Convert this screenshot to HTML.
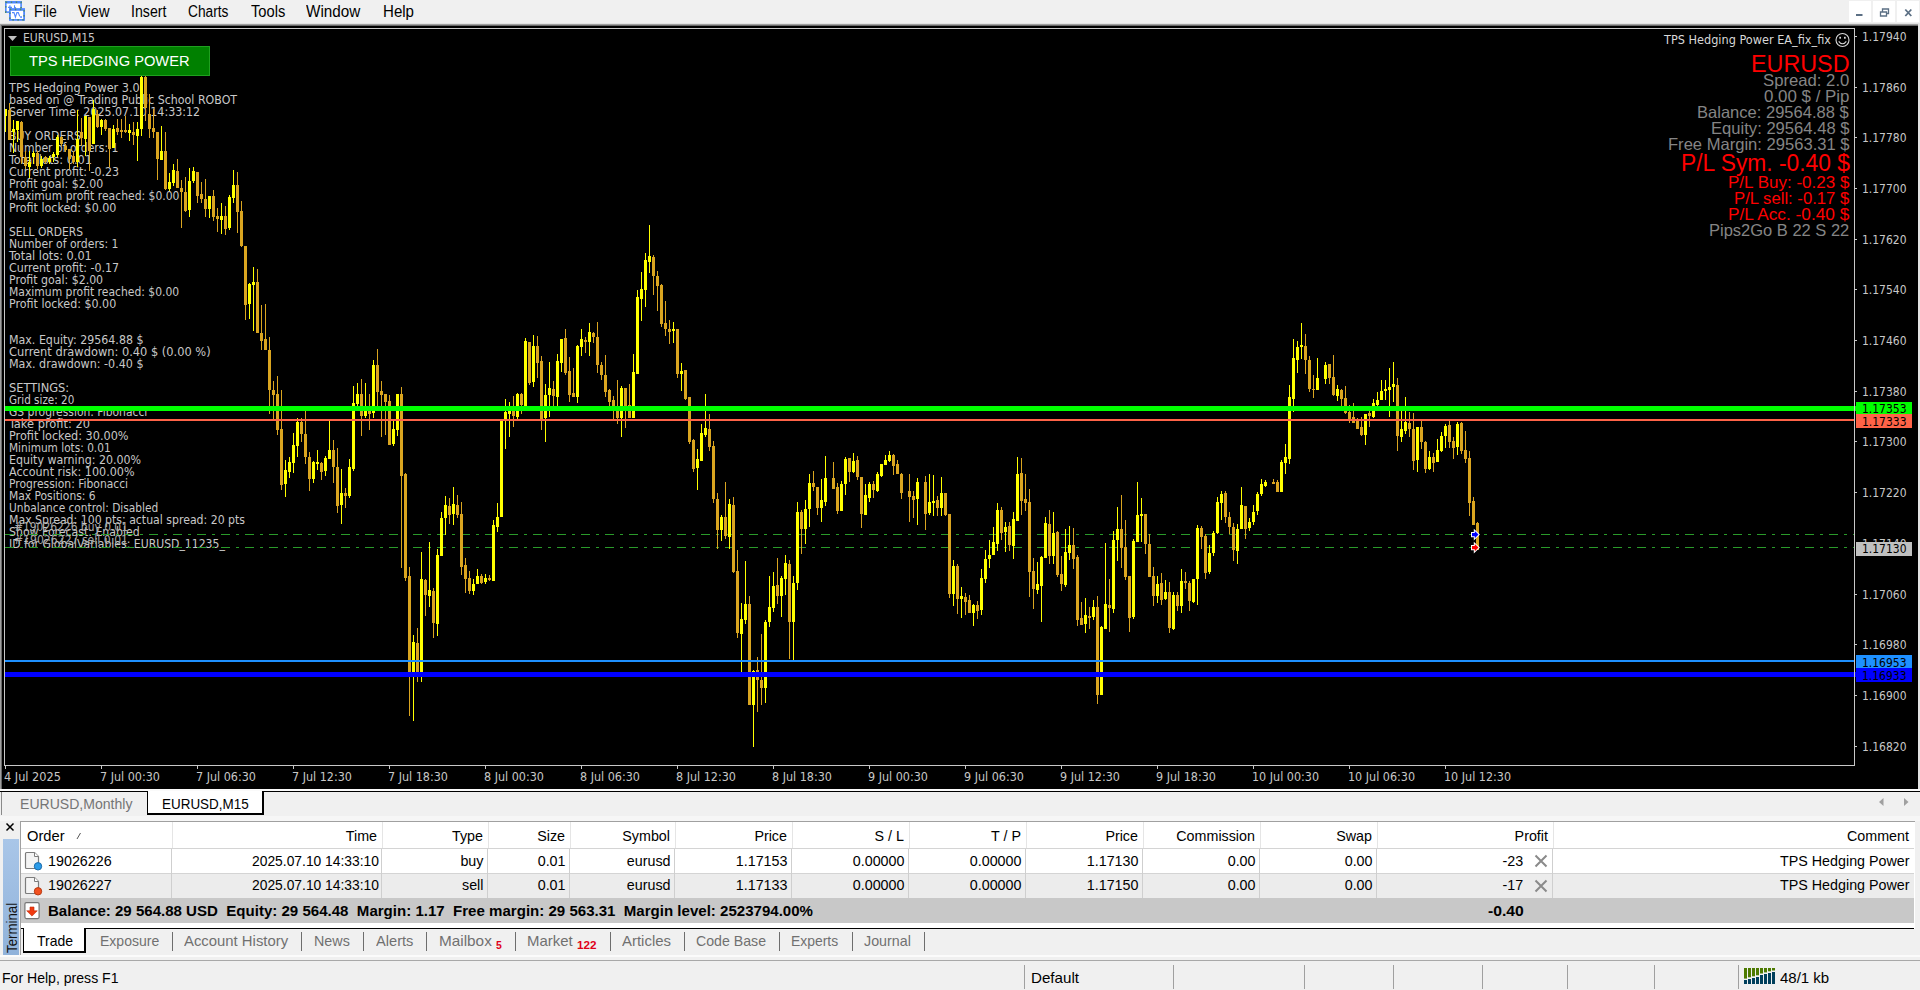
<!DOCTYPE html>
<html lang="en"><head><meta charset="utf-8"><title>EURUSD,M15</title>
<style>
html,body{margin:0;padding:0;background:#f0f0f0;overflow:hidden}
body{width:1920px;height:990px;position:relative;font-family:"Liberation Sans",sans-serif;font-size:14.3px;color:#000}
.a{position:absolute;white-space:nowrap}
#menu{left:0;top:0;width:1920px;height:23px;background:#f0f0f0}
#chart{left:0;top:23px;width:1920px;height:767px;background:#000}
</style></head><body>
<div id="menu" class="a"></div>
<div id="chart" class="a"></div>
<svg class="a" style="left:0;top:0" width="1920" height="990" viewBox="0 0 1920 990" shape-rendering="crispEdges">
<rect x="0" y="23" width="1920" height="1" fill="#e3e3e3"/>
<rect x="0" y="24" width="1920" height="1" fill="#a0a0a0"/>
<rect x="0" y="25" width="1920" height="1" fill="#696969"/>
<rect x="0" y="24" width="1" height="766" fill="#a0a0a0"/>
<rect x="1" y="25" width="1" height="765" fill="#696969"/>
<rect x="2" y="26" width="1916" height="764" fill="#000"/>
<rect x="1918" y="24" width="2" height="766" fill="#e3e3e3"/>
</svg>
<span class="a" style="top:82.62px;font-size:11.8px;line-height:11.8px;color:#c8c8c8;font-family:'DejaVu Sans Condensed','DejaVu Sans',sans-serif;left:9.3px;transform-origin:0 50%;transform:scaleX(1.0621);">TPS Hedging Power 3.0</span>
<span class="a" style="top:94.62px;font-size:11.8px;line-height:11.8px;color:#c8c8c8;font-family:'DejaVu Sans Condensed','DejaVu Sans',sans-serif;left:9.3px;transform-origin:0 50%;transform:scaleX(1.0410);">based on @ Trading Public School ROBOT</span>
<span class="a" style="top:106.62px;font-size:11.8px;line-height:11.8px;color:#c8c8c8;font-family:'DejaVu Sans Condensed','DejaVu Sans',sans-serif;left:9.3px;transform-origin:0 50%;transform:scaleX(1.0452);">Server Time: 2025.07.10 14:33:12</span>
<span class="a" style="top:130.62px;font-size:11.8px;line-height:11.8px;color:#c8c8c8;font-family:'DejaVu Sans Condensed','DejaVu Sans',sans-serif;left:9.3px;transform-origin:0 50%;transform:scaleX(1.0341);">BUY ORDERS</span>
<span class="a" style="top:142.62px;font-size:11.8px;line-height:11.8px;color:#c8c8c8;font-family:'DejaVu Sans Condensed','DejaVu Sans',sans-serif;left:9.3px;transform-origin:0 50%;transform:scaleX(1.0214);">Number of orders: 1</span>
<span class="a" style="top:154.62px;font-size:11.8px;line-height:11.8px;color:#c8c8c8;font-family:'DejaVu Sans Condensed','DejaVu Sans',sans-serif;left:9.3px;transform-origin:0 50%;transform:scaleX(1.0675);">Total lots: 0.01</span>
<span class="a" style="top:166.62px;font-size:11.8px;line-height:11.8px;color:#c8c8c8;font-family:'DejaVu Sans Condensed','DejaVu Sans',sans-serif;left:9.3px;transform-origin:0 50%;transform:scaleX(1.0410);">Current profit: -0.23</span>
<span class="a" style="top:178.62px;font-size:11.8px;line-height:11.8px;color:#c8c8c8;font-family:'DejaVu Sans Condensed','DejaVu Sans',sans-serif;left:9.3px;transform-origin:0 50%;transform:scaleX(1.0350);">Profit goal: $2.00</span>
<span class="a" style="top:190.62px;font-size:11.8px;line-height:11.8px;color:#c8c8c8;font-family:'DejaVu Sans Condensed','DejaVu Sans',sans-serif;left:9.3px;transform-origin:0 50%;transform:scaleX(1.0178);">Maximum profit reached: $0.00</span>
<span class="a" style="top:202.62px;font-size:11.8px;line-height:11.8px;color:#c8c8c8;font-family:'DejaVu Sans Condensed','DejaVu Sans',sans-serif;left:9.3px;transform-origin:0 50%;transform:scaleX(1.0467);">Profit locked: $0.00</span>
<span class="a" style="top:226.62px;font-size:11.8px;line-height:11.8px;color:#c8c8c8;font-family:'DejaVu Sans Condensed','DejaVu Sans',sans-serif;left:9.3px;transform-origin:0 50%;transform:scaleX(1.0087);">SELL ORDERS</span>
<span class="a" style="top:238.62px;font-size:11.8px;line-height:11.8px;color:#c8c8c8;font-family:'DejaVu Sans Condensed','DejaVu Sans',sans-serif;left:9.3px;transform-origin:0 50%;transform:scaleX(1.0223);">Number of orders: 1</span>
<span class="a" style="top:250.62px;font-size:11.8px;line-height:11.8px;color:#c8c8c8;font-family:'DejaVu Sans Condensed','DejaVu Sans',sans-serif;left:9.3px;transform-origin:0 50%;transform:scaleX(1.0662);">Total lots: 0.01</span>
<span class="a" style="top:262.62px;font-size:11.8px;line-height:11.8px;color:#c8c8c8;font-family:'DejaVu Sans Condensed','DejaVu Sans',sans-serif;left:9.3px;transform-origin:0 50%;transform:scaleX(1.0410);">Current profit: -0.17</span>
<span class="a" style="top:274.62px;font-size:11.8px;line-height:11.8px;color:#c8c8c8;font-family:'DejaVu Sans Condensed','DejaVu Sans',sans-serif;left:9.3px;transform-origin:0 50%;transform:scaleX(1.0339);">Profit goal: $2.00</span>
<span class="a" style="top:286.62px;font-size:11.8px;line-height:11.8px;color:#c8c8c8;font-family:'DejaVu Sans Condensed','DejaVu Sans',sans-serif;left:9.3px;transform-origin:0 50%;transform:scaleX(1.0160);">Maximum profit reached: $0.00</span>
<span class="a" style="top:298.62px;font-size:11.8px;line-height:11.8px;color:#c8c8c8;font-family:'DejaVu Sans Condensed','DejaVu Sans',sans-serif;left:9.3px;transform-origin:0 50%;transform:scaleX(1.0447);">Profit locked: $0.00</span>
<span class="a" style="top:334.62px;font-size:11.8px;line-height:11.8px;color:#c8c8c8;font-family:'DejaVu Sans Condensed','DejaVu Sans',sans-serif;left:9.3px;transform-origin:0 50%;transform:scaleX(1.0420);">Max. Equity: 29564.88 $</span>
<span class="a" style="top:346.62px;font-size:11.8px;line-height:11.8px;color:#c8c8c8;font-family:'DejaVu Sans Condensed','DejaVu Sans',sans-serif;left:9.3px;transform-origin:0 50%;transform:scaleX(1.0750);">Current drawdown: 0.40 $ (0.00 %)</span>
<span class="a" style="top:358.62px;font-size:11.8px;line-height:11.8px;color:#c8c8c8;font-family:'DejaVu Sans Condensed','DejaVu Sans',sans-serif;left:9.3px;transform-origin:0 50%;transform:scaleX(1.0498);">Max. drawdown: -0.40 $</span>
<span class="a" style="top:382.62px;font-size:11.8px;line-height:11.8px;color:#c8c8c8;font-family:'DejaVu Sans Condensed','DejaVu Sans',sans-serif;left:9.3px;transform-origin:0 50%;transform:scaleX(1.0786);">SETTINGS:</span>
<span class="a" style="top:394.62px;font-size:11.8px;line-height:11.8px;color:#c8c8c8;font-family:'DejaVu Sans Condensed','DejaVu Sans',sans-serif;left:9.3px;transform-origin:0 50%;transform:scaleX(0.9792);">Grid size: 20</span>
<span class="a" style="top:406.62px;font-size:11.8px;line-height:11.8px;color:#c8c8c8;font-family:'DejaVu Sans Condensed','DejaVu Sans',sans-serif;left:9.3px;transform-origin:0 50%;transform:scaleX(1.0132);">GS progression: Fibonacci</span>
<span class="a" style="top:418.62px;font-size:11.8px;line-height:11.8px;color:#c8c8c8;font-family:'DejaVu Sans Condensed','DejaVu Sans',sans-serif;left:9.3px;transform-origin:0 50%;transform:scaleX(1.0744);">Take profit: 20</span>
<span class="a" style="top:430.62px;font-size:11.8px;line-height:11.8px;color:#c8c8c8;font-family:'DejaVu Sans Condensed','DejaVu Sans',sans-serif;left:9.3px;transform-origin:0 50%;transform:scaleX(1.0605);">Profit locked: 30.00%</span>
<span class="a" style="top:442.62px;font-size:11.8px;line-height:11.8px;color:#c8c8c8;font-family:'DejaVu Sans Condensed','DejaVu Sans',sans-serif;left:9.3px;transform-origin:0 50%;transform:scaleX(0.9935);">Minimum lots: 0.01</span>
<span class="a" style="top:454.62px;font-size:11.8px;line-height:11.8px;color:#c8c8c8;font-family:'DejaVu Sans Condensed','DejaVu Sans',sans-serif;left:9.3px;transform-origin:0 50%;transform:scaleX(1.0416);">Equity warning: 20.00%</span>
<span class="a" style="top:466.62px;font-size:11.8px;line-height:11.8px;color:#c8c8c8;font-family:'DejaVu Sans Condensed','DejaVu Sans',sans-serif;left:9.3px;transform-origin:0 50%;transform:scaleX(1.0516);">Account risk: 100.00%</span>
<span class="a" style="top:478.62px;font-size:11.8px;line-height:11.8px;color:#c8c8c8;font-family:'DejaVu Sans Condensed','DejaVu Sans',sans-serif;left:9.3px;transform-origin:0 50%;transform:scaleX(1.0125);">Progression: Fibonacci</span>
<span class="a" style="top:490.62px;font-size:11.8px;line-height:11.8px;color:#c8c8c8;font-family:'DejaVu Sans Condensed','DejaVu Sans',sans-serif;left:9.3px;transform-origin:0 50%;transform:scaleX(1.0090);">Max Positions: 6</span>
<span class="a" style="top:502.62px;font-size:11.8px;line-height:11.8px;color:#c8c8c8;font-family:'DejaVu Sans Condensed','DejaVu Sans',sans-serif;left:9.3px;transform-origin:0 50%;transform:scaleX(0.9981);">Unbalance control: Disabled</span>
<span class="a" style="top:514.62px;font-size:11.8px;line-height:11.8px;color:#c8c8c8;font-family:'DejaVu Sans Condensed','DejaVu Sans',sans-serif;left:9.3px;transform-origin:0 50%;transform:scaleX(1.0303);">Max Spread: 100 pts; actual spread: 20 pts</span>
<span class="a" style="top:526.62px;font-size:11.8px;line-height:11.8px;color:#c8c8c8;font-family:'DejaVu Sans Condensed','DejaVu Sans',sans-serif;left:9.3px;transform-origin:0 50%;transform:scaleX(1.0315);">Show Forecast: Enabled</span>
<span class="a" style="top:538.62px;font-size:11.8px;line-height:11.8px;color:#c8c8c8;font-family:'DejaVu Sans Condensed','DejaVu Sans',sans-serif;left:9.3px;transform-origin:0 50%;transform:scaleX(1.0244);">ID for GlobalVariables: EURUSD_11235_</span>
<span class="a" style="top:539.30px;font-size:11.7px;line-height:11.7px;color:#c8c8c8;font-family:'DejaVu Sans Condensed','DejaVu Sans',sans-serif;left:1861.5px;transform-origin:0 50%;transform:scaleX(1.0237);">1.17140</span>

<svg class="a" style="left:0;top:0" width="1920" height="990" viewBox="0 0 1920 990" shape-rendering="crispEdges">
<g stroke="#2a9a2a" stroke-width="1" stroke-dasharray="9 6 3 6" stroke-dashoffset="0" fill="none"><path d="M5 534.5H1854M5 547.5H1854"/></g>
<path fill="#daa520" d="M9 103v37h1v-37zM8 110v30h3v-30zM21 121v43h1v-43zM20 122v35h3v-35zM25 151v18h1v-18zM24 157v9h3v-9zM37 151v18h1v-18zM36 153v13h3v-13zM45 156v8h1v-8zM44 157v5h3v-5zM61 136v10h1v-10zM60 137v7h3v-7zM65 144v8h1v-8zM64 146v4h3v-4zM69 149v20h1v-20zM68 149v10h3v-10zM73 151v13h1v-13zM72 156v6h3v-6zM81 118v28h1v-28zM80 132v6h3v-6zM89 117v54h1v-54zM88 117v34h3v-34zM97 110v18h1v-18zM96 114v13h3v-13zM105 119v12h1v-12zM104 120v9h3v-9zM109 128v39h1v-39zM108 128v21h3v-21zM117 119v16h1v-16zM116 128v4h3v-4zM121 119v19h1v-19zM120 130v2h3v-2zM125 116v17h1v-17zM124 130v2h3v-2zM133 122v23h1v-23zM132 132v3h3v-3zM145 76v45h1v-45zM144 77v31h3v-31zM149 94v44h1v-44zM148 114v15h3v-15zM153 109v29h1v-29zM152 128v4h3v-4zM157 132v48h1v-48zM156 132v27h3v-27zM165 132v58h1v-58zM164 151v38h3v-38zM177 159v29h1v-29zM176 171v17h3v-17zM181 180v48h1v-48zM180 188v4h3v-4zM185 177v35h1v-35zM184 192v19h3v-19zM197 172v31h1v-31zM196 172v24h3v-24zM201 182v21h1v-21zM200 194v5h3v-5zM205 179v38h1v-38zM204 199v10h3v-10zM213 190v31h1v-31zM212 196v21h3v-21zM217 208v24h1v-24zM216 216v3h3v-3zM225 206v29h1v-29zM224 216v13h3v-13zM237 172v61h1v-61zM236 185v27h3v-27zM241 201v46h1v-46zM240 211v35h3v-35zM245 246v74h1v-74zM244 246v59h3v-59zM257 269v64h1v-64zM256 282v51h3v-51zM261 305v45h1v-45zM260 333v8h3v-8zM265 304v46h1v-46zM264 339v11h3v-11zM269 337v77h1v-77zM268 350v40h3v-40zM273 381v38h1v-38zM272 390v5h3v-5zM277 376v59h1v-59zM276 394v36h3v-36zM281 390v100h1v-100zM280 429v56h3v-56zM301 418v24h1v-24zM300 422v12h3v-12zM305 411v53h1v-53zM304 434v23h3v-23zM309 452v39h1v-39zM308 457v22h3v-22zM321 462v18h1v-18zM320 463v9h3v-9zM333 440v43h1v-43zM332 450v17h3v-17zM337 448v65h1v-65zM336 467v39h3v-39zM345 488v20h1v-20zM344 493v3h3v-3zM361 379v57h1v-57zM360 394v22h3v-22zM369 394v36h1v-36zM368 411v3h3v-3zM377 349v57h1v-57zM376 365v27h3v-27zM381 381v56h1v-56zM380 391v4h3v-4zM385 394v41h1v-41zM384 394v8h3v-8zM389 395v50h1v-50zM388 401v44h3v-44zM401 387v181h1v-181zM400 394v82h3v-82zM405 473v108h1v-108zM404 474v104h3v-104zM409 567v149h1v-149zM408 576v101h3v-101zM417 628v54h1v-54zM416 643v34h3v-34zM425 579v37h1v-37zM424 580v15h3v-15zM433 588v50h1v-50zM432 591v32h3v-32zM449 498v26h1v-26zM448 506v9h3v-9zM457 495v23h1v-23zM456 505v10h3v-10zM461 502v73h1v-73zM460 514v53h3v-53zM465 558v35h1v-35zM464 565v14h3v-14zM469 571v23h1v-23zM468 578v13h3v-13zM481 574v10h1v-10zM480 576v7h3v-7zM489 575v6h1v-6zM488 578v2h3v-2zM513 396v31h1v-31zM512 411v5h3v-5zM521 393v21h1v-21zM520 394v11h3v-11zM529 342v43h1v-43zM528 342v41h3v-41zM537 336v42h1v-42zM536 346v17h3v-17zM541 356v74h1v-74zM540 361v58h3v-58zM553 381v25h1v-25zM552 389v7h3v-7zM565 329v46h1v-46zM564 338v35h3v-35zM569 357v45h1v-45zM568 371v24h3v-24zM573 368v29h1v-29zM572 393v4h3v-4zM585 337v16h1v-16zM584 340v2h3v-2zM593 332v11h1v-11zM592 333v4h3v-4zM597 322v51h1v-51zM596 337v28h3v-28zM601 362v18h1v-18zM600 365v10h3v-10zM605 355v42h1v-42zM604 375v17h3v-17zM609 389v17h1v-17zM608 390v12h3v-12zM613 396v23h1v-23zM612 400v8h3v-8zM617 380v44h1v-44zM616 408v10h3v-10zM625 388v40h1v-40zM624 388v20h3v-20zM629 384v34h1v-34zM628 405v13h3v-13zM653 255v40h1v-40zM652 257v19h3v-19zM657 271v40h1v-40zM656 276v10h3v-10zM661 284v43h1v-43zM660 285v39h3v-39zM665 301v35h1v-35zM664 323v6h3v-6zM669 320v24h1v-24zM668 329v3h3v-3zM677 329v49h1v-49zM676 329v45h3v-45zM685 370v30h1v-30zM684 370v29h3v-29zM689 397v47h1v-47zM688 397v45h3v-45zM693 439v33h1v-33zM692 440v29h3v-29zM709 414v37h1v-37zM708 429v18h3v-18zM713 441v62h1v-62zM712 446v53h3v-53zM717 493v56h1v-56zM716 499v31h3v-31zM725 482v57h1v-57zM724 517v19h3v-19zM733 497v76h1v-76zM732 505v67h3v-67zM737 550v88h1v-88zM736 571v62h3v-62zM749 596v109h1v-109zM748 604v101h3v-101zM757 657v55h1v-55zM756 670v10h3v-10zM761 634v71h1v-71zM760 680v8h3v-8zM777 558v46h1v-46zM776 585v11h3v-11zM789 560v99h1v-99zM788 564v58h3v-58zM801 510v44h1v-44zM800 512v17h3v-17zM813 471v20h1v-20zM812 483v4h3v-4zM817 487v28h1v-28zM816 487v21h3v-21zM833 462v27h1v-27zM832 478v11h3v-11zM837 483v31h1v-31zM836 487v24h3v-24zM849 458v24h1v-24zM848 458v14h3v-14zM857 456v24h1v-24zM856 460v17h3v-17zM861 477v51h1v-51zM860 477v37h3v-37zM873 481v17h1v-17zM872 484v6h3v-6zM893 454v21h1v-21zM892 455v11h3v-11zM897 460v14h1v-14zM896 464v10h3v-10zM901 473v26h1v-26zM900 474v19h3v-19zM909 474v48h1v-48zM908 491v6h3v-6zM913 491v27h1v-27zM912 496v4h3v-4zM925 476v54h1v-54zM924 482v32h3v-32zM937 496v20h1v-20zM936 500v8h3v-8zM945 493v23h1v-23zM944 493v22h3v-22zM949 514v84h1v-84zM948 514v80h3v-80zM957 564v50h1v-50zM956 566v33h3v-33zM965 593v22h1v-22zM964 597v5h3v-5zM969 595v18h1v-18zM968 600v13h3v-13zM977 601v18h1v-18zM976 605v6h3v-6zM1001 507v33h1v-33zM1000 510v23h3v-23zM1009 522v29h1v-29zM1008 526v19h3v-19zM1021 458v57h1v-57zM1020 473v28h3v-28zM1025 474v37h1v-37zM1024 499v4h3v-4zM1029 489v108h1v-108zM1028 502v70h3v-70zM1033 558v51h1v-51zM1032 571v18h3v-18zM1049 510v54h1v-54zM1048 524v32h3v-32zM1057 531v46h1v-46zM1056 532v43h3v-43zM1061 556v35h1v-35zM1060 574v10h3v-10zM1073 528v41h1v-41zM1072 545v14h3v-14zM1077 555v71h1v-71zM1076 557v63h3v-63zM1081 602v23h1v-23zM1080 618v7h3v-7zM1089 607v22h1v-22zM1088 616v2h3v-2zM1097 596v108h1v-108zM1096 607v88h3v-88zM1109 579v53h1v-53zM1108 605v3h3v-3zM1121 495v73h1v-73zM1120 529v19h3v-19zM1125 520v60h1v-60zM1124 547v30h3v-30zM1129 576v56h1v-56zM1128 576v42h3v-42zM1145 514v40h1v-40zM1144 514v30h3v-30zM1149 534v43h1v-43zM1148 544v33h3v-33zM1153 567v39h1v-39zM1152 576v20h3v-20zM1161 573v32h1v-32zM1160 583v17h3v-17zM1169 582v51h1v-51zM1168 592v36h3v-36zM1177 592v19h1v-19zM1176 595v11h3v-11zM1185 572v17h1v-17zM1184 581v2h3v-2zM1189 581v30h1v-30zM1188 583v18h3v-18zM1201 526v23h1v-23zM1200 528v9h3v-9zM1205 534v45h1v-45zM1204 536v37h3v-37zM1225 491v32h1v-32zM1224 493v24h3v-24zM1229 512v22h1v-22zM1228 517v10h3v-10zM1233 523v38h1v-38zM1232 527v23h3v-23zM1245 506v33h1v-33zM1244 506v23h3v-23zM1273 479v5h1v-5zM1272 482v2h3v-2zM1277 480v12h1v-12zM1276 482v10h3v-10zM1305 334v40h1v-40zM1304 346v14h3v-14zM1309 356v36h1v-36zM1308 360v29h3v-29zM1313 375v23h1v-23zM1312 389v1h3v-1zM1329 364v20h1v-20zM1328 364v14h3v-14zM1333 355v41h1v-41zM1332 377v18h3v-18zM1341 389v17h1v-17zM1340 390v9h3v-9zM1345 386v28h1v-28zM1344 398v15h3v-15zM1349 405v18h1v-18zM1348 412v7h3v-7zM1353 403v20h1v-20zM1352 417v6h3v-6zM1357 418v11h1v-11zM1356 421v8h3v-8zM1361 417v19h1v-19zM1360 427v8h3v-8zM1369 411v16h1v-16zM1368 413v3h3v-3zM1397 378v73h1v-73zM1396 385v51h3v-51zM1409 412v25h1v-25zM1408 423v6h3v-6zM1413 413v57h1v-57zM1412 429v32h3v-32zM1421 421v28h1v-28zM1420 427v15h3v-15zM1425 441v32h1v-32zM1424 442v27h3v-27zM1433 453v19h1v-19zM1432 457v6h3v-6zM1449 421v27h1v-27zM1448 425v17h3v-17zM1453 437v22h1v-22zM1452 441v7h3v-7zM1461 422v32h1v-32zM1460 423v28h3v-28zM1465 431v32h1v-32zM1464 450v9h3v-9zM1469 451v65h1v-65zM1468 458v45h3v-45zM1473 497v28h1v-28zM1472 501v24h3v-24zM1477 522v28h1v-28zM1476 523v27h3v-27z"/>
<path fill="#ffff00" d="M5 109v23h1v-23zM4 109v7h3v-7zM13 120v33h1v-33zM12 129v3h3v-3zM17 121v21h1v-21zM16 121v9h3v-9zM29 151v27h1v-27zM28 162v5h3v-5zM33 151v13h1v-13zM32 153v4h3v-4zM41 156v12h1v-12zM40 159v7h3v-7zM49 156v8h1v-8zM48 158v4h3v-4zM53 152v10h1v-10zM52 154v3h3v-3zM57 135v22h1v-22zM56 137v18h3v-18zM77 110v57h1v-57zM76 139v23h3v-23zM85 116v40h1v-40zM84 116v23h3v-23zM93 100v44h1v-44zM92 109v35h3v-35zM101 119v16h1v-16zM100 120v7h3v-7zM113 125v23h1v-23zM112 129v19h3v-19zM129 124v17h1v-17zM128 130v3h3v-3zM137 122v39h1v-39zM136 129v7h3v-7zM141 76v60h1v-60zM140 77v52h3v-52zM161 126v34h1v-34zM160 151v9h3v-9zM169 173v18h1v-18zM168 182v7h3v-7zM173 164v22h1v-22zM172 170v13h3v-13zM189 168v49h1v-49zM188 181v29h3v-29zM193 167v16h1v-16zM192 171v10h3v-10zM209 196v22h1v-22zM208 196v13h3v-13zM221 203v31h1v-31zM220 216v4h3v-4zM229 195v35h1v-35zM228 197v31h3v-31zM233 170v33h1v-33zM232 185v13h3v-13zM249 283v36h1v-36zM248 284v20h3v-20zM253 267v64h1v-64zM252 282v3h3v-3zM285 460v37h1v-37zM284 470v14h3v-14zM289 457v21h1v-21zM288 462v10h3v-10zM293 433v40h1v-40zM292 445v18h3v-18zM297 418v39h1v-39zM296 422v24h3v-24zM313 461v22h1v-22zM312 462v17h3v-17zM317 450v20h1v-20zM316 462v2h3v-2zM325 456v20h1v-20zM324 458v13h3v-13zM329 421v38h1v-38zM328 450v9h3v-9zM341 469v55h1v-55zM340 493v12h3v-12zM349 459v39h1v-39zM348 467v29h3v-29zM353 386v85h1v-85zM352 403v66h3v-66zM357 383v23h1v-23zM356 394v10h3v-10zM365 383v35h1v-35zM364 411v5h3v-5zM373 360v58h1v-58zM372 365v48h3v-48zM393 421v25h1v-25zM392 429v15h3v-15zM397 394v42h1v-42zM396 394v36h3v-36zM413 635v86h1v-86zM412 642v35h3v-35zM421 552v130h1v-130zM420 579v98h3v-98zM429 542v65h1v-65zM428 590v6h3v-6zM437 549v87h1v-87zM436 555v69h3v-69zM441 512v44h1v-44zM440 518v38h3v-38zM445 496v39h1v-39zM444 505v13h3v-13zM453 487v38h1v-38zM452 504v10h3v-10zM473 579v16h1v-16zM472 584v7h3v-7zM477 569v15h1v-15zM476 576v8h3v-8zM485 574v10h1v-10zM484 578v4h3v-4zM493 520v61h1v-61zM492 525v56h3v-56zM497 503v29h1v-29zM496 517v10h3v-10zM501 420v97h1v-97zM500 420v97h3v-97zM505 399v50h1v-50zM504 412v8h3v-8zM509 402v35h1v-35zM508 411v3h3v-3zM517 393v26h1v-26zM516 394v23h3v-23zM525 338v68h1v-68zM524 341v65h3v-65zM533 335v52h1v-52zM532 346v36h3v-36zM545 384v58h1v-58zM544 395v23h3v-23zM549 362v55h1v-55zM548 388v7h3v-7zM557 354v52h1v-52zM556 361v36h3v-36zM561 339v33h1v-33zM560 339v24h3v-24zM577 345v58h1v-58zM576 346v51h3v-51zM581 329v27h1v-27zM580 339v8h3v-8zM589 323v33h1v-33zM588 332v10h3v-10zM621 386v51h1v-51zM620 388v30h3v-30zM633 354v64h1v-64zM632 372v46h3v-46zM637 290v84h1v-84zM636 297v77h3v-77zM641 272v49h1v-49zM640 289v10h3v-10zM645 253v54h1v-54zM644 260v30h3v-30zM649 225v48h1v-48zM648 256v6h3v-6zM673 322v21h1v-21zM672 329v2h3v-2zM681 363v28h1v-28zM680 371v3h3v-3zM697 449v41h1v-41zM696 459v9h3v-9zM701 424v37h1v-37zM700 433v28h3v-28zM705 394v43h1v-43zM704 428v7h3v-7zM721 515v26h1v-26zM720 517v13h3v-13zM729 499v50h1v-50zM728 504v33h3v-33zM741 603v69h1v-69zM740 619v15h3v-15zM745 561v63h1v-63zM744 604v16h3v-16zM753 670v77h1v-77zM752 671v34h3v-34zM765 620v83h1v-83zM764 622v66h3v-66zM769 576v51h1v-51zM768 607v15h3v-15zM773 572v40h1v-40zM772 586v22h3v-22zM781 576v41h1v-41zM780 578v18h3v-18zM785 555v40h1v-40zM784 563v16h3v-16zM793 576v84h1v-84zM792 583v39h3v-39zM797 502v88h1v-88zM796 512v71h3v-71zM805 500v44h1v-44zM804 509v20h3v-20zM809 474v53h1v-53zM808 483v26h3v-26zM821 479v43h1v-43zM820 500v8h3v-8zM825 456v50h1v-50zM824 478v24h3v-24zM841 481v30h1v-30zM840 484v27h3v-27zM845 457v38h1v-38zM844 459v25h3v-25zM853 453v20h1v-20zM852 461v11h3v-11zM865 484v31h1v-31zM864 495v20h3v-20zM869 482v20h1v-20zM868 484v14h3v-14zM877 472v20h1v-20zM876 474v17h3v-17zM881 464v13h1v-13zM880 464v12h3v-12zM885 455v10h1v-10zM884 460v5h3v-5zM889 451v11h1v-11zM888 455v6h3v-6zM917 478v47h1v-47zM916 482v17h3v-17zM929 474v41h1v-41zM928 502v11h3v-11zM933 475v41h1v-41zM932 501v2h3v-2zM941 477v39h1v-39zM940 493v15h3v-15zM953 560v46h1v-46zM952 566v28h3v-28zM961 587v31h1v-31zM960 596v3h3v-3zM973 604v22h1v-22zM972 605v8h3v-8zM981 569v46h1v-46zM980 578v32h3v-32zM985 550v33h1v-33zM984 559v20h3v-20zM989 540v28h1v-28zM988 555v4h3v-4zM993 527v28h1v-28zM992 542v13h3v-13zM997 503v48h1v-48zM996 510v34h3v-34zM1005 522v30h1v-30zM1004 527v5h3v-5zM1013 512v47h1v-47zM1012 519v27h3v-27zM1017 457v64h1v-64zM1016 474v47h3v-47zM1037 562v32h1v-32zM1036 584v6h3v-6zM1041 556v66h1v-66zM1040 557v29h3v-29zM1045 517v41h1v-41zM1044 523v35h3v-35zM1053 512v52h1v-52zM1052 533v23h3v-23zM1065 529v58h1v-58zM1064 552v33h3v-33zM1069 526v34h1v-34zM1068 545v8h3v-8zM1085 598v35h1v-35zM1084 615v9h3v-9zM1093 600v20h1v-20zM1092 607v10h3v-10zM1101 626v69h1v-69zM1100 627v68h3v-68zM1105 543v86h1v-86zM1104 604v25h3v-25zM1113 531v82h1v-82zM1112 540v69h3v-69zM1117 507v54h1v-54zM1116 529v11h3v-11zM1133 539v80h1v-80zM1132 541v76h3v-76zM1137 482v60h1v-60zM1136 515v27h3v-27zM1141 498v44h1v-44zM1140 514v2h3v-2zM1157 576v27h1v-27zM1156 584v12h3v-12zM1165 580v20h1v-20zM1164 592v7h3v-7zM1173 592v38h1v-38zM1172 595v34h3v-34zM1181 569v44h1v-44zM1180 581v25h3v-25zM1193 579v24h1v-24zM1192 579v23h3v-23zM1197 525v80h1v-80zM1196 528v51h3v-51zM1209 545v29h1v-29zM1208 553v19h3v-19zM1213 531v25h1v-25zM1212 533v20h3v-20zM1217 497v37h1v-37zM1216 502v31h3v-31zM1221 491v29h1v-29zM1220 494v9h3v-9zM1237 524v40h1v-40zM1236 529v22h3v-22zM1241 487v42h1v-42zM1240 505v24h3v-24zM1249 518v13h1v-13zM1248 522v6h3v-6zM1253 505v20h1v-20zM1252 512v10h3v-10zM1257 492v23h1v-23zM1256 494v17h3v-17zM1261 479v17h1v-17zM1260 484v10h3v-10zM1265 480v7h1v-7zM1264 482v4h3v-4zM1281 460v32h1v-32zM1280 462v30h3v-30zM1285 444v30h1v-30zM1284 457v6h3v-6zM1289 385v79h1v-79zM1288 397v62h3v-62zM1293 339v73h1v-73zM1292 358v41h3v-41zM1297 341v32h1v-32zM1296 347v13h3v-13zM1301 323v36h1v-36zM1300 345v2h3v-2zM1317 358v32h1v-32zM1316 378v12h3v-12zM1325 362v22h1v-22zM1324 365v14h3v-14zM1337 385v16h1v-16zM1336 389v7h3v-7zM1365 414v31h1v-31zM1364 414v21h3v-21zM1373 399v19h1v-19zM1372 403v14h3v-14zM1377 392v14h1v-14zM1376 400v5h3v-5zM1381 380v20h1v-20zM1380 391v9h3v-9zM1385 380v20h1v-20zM1384 389v2h3v-2zM1389 368v49h1v-49zM1388 387v3h3v-3zM1393 362v40h1v-40zM1392 384v3h3v-3zM1401 411v31h1v-31zM1400 429v8h3v-8zM1405 397v37h1v-37zM1404 422v9h3v-9zM1417 427v45h1v-45zM1416 427v33h3v-33zM1429 451v19h1v-19zM1428 457v12h3v-12zM1437 439v23h1v-23zM1436 450v12h3v-12zM1441 432v20h1v-20zM1440 436v15h3v-15zM1445 424v24h1v-24zM1444 426v10h3v-10zM1457 422v33h1v-33zM1456 424v23h3v-23z"/>
<g fill="#00ff00"><rect x="5" y="406" width="1851" height="5"/><rect x="1856" y="402" width="56" height="12"/></g>
<g fill="#ff6347"><rect x="5" y="419" width="1849" height="2"/><rect x="1856" y="414" width="56" height="14"/></g>
<g fill="#1e90ff"><rect x="5" y="660" width="1849" height="2"/><rect x="1856" y="655" width="56" height="13"/></g>
<g fill="#0000ff"><rect x="5" y="672" width="1851" height="5"/><rect x="1856" y="668" width="56" height="14"/></g>
<g fill="#c8c8c8">
<rect x="4" y="28" width="1851" height="1"/><rect x="4" y="28" width="1" height="738"/><rect x="1854" y="28" width="1" height="738"/><rect x="4" y="765" width="1851" height="1"/>
<rect x="1855" y="36" width="2" height="1"/><rect x="1855" y="87" width="2" height="1"/><rect x="1855" y="137" width="2" height="1"/><rect x="1855" y="188" width="2" height="1"/><rect x="1855" y="239" width="2" height="1"/><rect x="1855" y="289" width="2" height="1"/><rect x="1855" y="340" width="2" height="1"/><rect x="1855" y="391" width="2" height="1"/><rect x="1855" y="441" width="2" height="1"/><rect x="1855" y="492" width="2" height="1"/><rect x="1855" y="594" width="2" height="1"/><rect x="1855" y="644" width="2" height="1"/><rect x="1855" y="695" width="2" height="1"/><rect x="1855" y="746" width="2" height="1"/><rect x="5" y="766" width="1" height="3"/><rect x="101" y="766" width="1" height="3"/><rect x="197" y="766" width="1" height="3"/><rect x="293" y="766" width="1" height="3"/><rect x="389" y="766" width="1" height="3"/><rect x="485" y="766" width="1" height="3"/><rect x="581" y="766" width="1" height="3"/><rect x="677" y="766" width="1" height="3"/><rect x="773" y="766" width="1" height="3"/><rect x="869" y="766" width="1" height="3"/><rect x="965" y="766" width="1" height="3"/><rect x="1061" y="766" width="1" height="3"/><rect x="1157" y="766" width="1" height="3"/><rect x="1253" y="766" width="1" height="3"/><rect x="1349" y="766" width="1" height="3"/><rect x="1445" y="766" width="1" height="3"/>
</g>
<rect x="1856" y="542" width="56" height="14" fill="#c0c0c0"/>
<g shape-rendering="geometricPrecision">
<path d="M1472 533H1474.800V531L1478.500 534.600L1474.800 538.200V536.200H1472z" fill="#0000ff" stroke="#fff" stroke-width="2" paint-order="stroke" stroke-linejoin="miter"/>
<path d="M1472 546H1474.800V544L1478.500 547.600L1474.800 551.200V549.200H1472z" fill="#ff0000" stroke="#fff" stroke-width="2" paint-order="stroke" stroke-linejoin="miter"/>
<circle cx="1842.5" cy="40" r="6.500" fill="none" stroke="#d8d8d8" stroke-width="1.100"/>
<rect x="1839.300" y="36.800" width="1.700" height="1.900" fill="#d8d8d8"/><rect x="1844" y="36.800" width="1.700" height="1.900" fill="#d8d8d8"/>
<path d="M1838.700 41.300q3.800 5 7.600 0" fill="none" stroke="#d8d8d8" stroke-width="1.100"/>
<path d="M8 36h9l-4.500 5z" fill="#c0c0c0"/>
</g>
</svg>

<div class="a" style="left:10px;top:46px;width:200px;height:30px;background:#008000;box-sizing:border-box;border:1px solid #1fa01f"></div>
<div class="a" style="left:0;top:789px;width:1920px;height:2px;background:#fafafa"></div>
<div class="a" style="left:0;top:791px;width:1920px;height:1px;background:#000"></div>
<div class="a" style="left:0;top:792px;width:1920px;height:24px;background:#f0f0f0"></div>
<div class="a" style="left:1px;top:792px;width:1px;height:23px;background:#8a8a8a"></div>
<div class="a" style="left:147px;top:791px;width:117px;height:24px;background:#fff;box-sizing:border-box;border-left:1px solid #000;border-right:2px solid #000;border-bottom:2px solid #000"></div>
<div class="a" style="left:0;top:816px;width:1920px;height:5px;background:#f6f6f6"></div>
<div class="a" style="left:0;top:821px;width:20px;height:137px;background:#f0f0f0"></div>
<div class="a" style="left:3px;top:839px;width:16px;height:117px;background:linear-gradient(#a9c6e8,#90b2da)"></div>
<div class="a" style="left:20px;top:821px;width:1895px;height:134px;background:#fff;box-sizing:border-box;border-left:1px solid #a0a0a0;border-top:1px solid #a0a0a0"></div>
<div class="a" style="left:21px;top:848px;width:1893px;height:1px;background:#d4d4d4"></div>
<div class="a" style="left:21px;top:873px;width:1893px;height:1px;background:#d4d4d4"></div>
<div class="a" style="left:21px;top:874px;width:1893px;height:24px;background:#ececec"></div>
<div class="a" style="left:21px;top:898px;width:1893px;height:25px;background:#c8c8c8"></div>
<div class="a" style="left:21px;top:928px;width:1893px;height:1px;background:#000"></div>
<div class="a" style="left:21px;top:929px;width:1894px;height:26px;background:#f0f0f0"></div>
<div class="a" style="left:1915px;top:821px;width:5px;height:137px;background:#f0f0f0"></div>
<div class="a" style="left:23px;top:928px;width:63px;height:25px;background:#fff;box-sizing:border-box;border-left:1px solid #000;border-right:2px solid #000;border-bottom:2px solid #000"></div>
<div class="a" style="left:0;top:955px;width:1920px;height:2px;background:#fbfbfb"></div>
<div class="a" style="left:0;top:957px;width:1920px;height:3px;background:#f0f0f0"></div>
<div class="a" style="left:0;top:960px;width:1920px;height:1px;background:#a8a8a8"></div>
<div class="a" style="left:0;top:961px;width:1920px;height:29px;background:#f0f0f0"></div>
<div class="a" style="left:1849px;top:1px;width:22px;height:21px;background:#fff"></div>
<div class="a" style="left:1873px;top:1px;width:22px;height:21px;background:#fff"></div>
<div class="a" style="left:1897px;top:1px;width:22px;height:21px;background:#fff"></div>
<div class="a" style="left:172px;top:822px;width:1px;height:26px;background:#e5e5e5"></div>
<div class="a" style="left:171px;top:849px;width:1px;height:49px;background:#cfcfcf"></div>
<div class="a" style="left:382px;top:822px;width:1px;height:26px;background:#e5e5e5"></div>
<div class="a" style="left:381px;top:849px;width:1px;height:49px;background:#cfcfcf"></div>
<div class="a" style="left:488px;top:822px;width:1px;height:26px;background:#e5e5e5"></div>
<div class="a" style="left:487px;top:849px;width:1px;height:49px;background:#cfcfcf"></div>
<div class="a" style="left:570px;top:822px;width:1px;height:26px;background:#e5e5e5"></div>
<div class="a" style="left:569px;top:849px;width:1px;height:49px;background:#cfcfcf"></div>
<div class="a" style="left:675px;top:822px;width:1px;height:26px;background:#e5e5e5"></div>
<div class="a" style="left:674px;top:849px;width:1px;height:49px;background:#cfcfcf"></div>
<div class="a" style="left:792px;top:822px;width:1px;height:26px;background:#e5e5e5"></div>
<div class="a" style="left:791px;top:849px;width:1px;height:49px;background:#cfcfcf"></div>
<div class="a" style="left:909px;top:822px;width:1px;height:26px;background:#e5e5e5"></div>
<div class="a" style="left:908px;top:849px;width:1px;height:49px;background:#cfcfcf"></div>
<div class="a" style="left:1026px;top:822px;width:1px;height:26px;background:#e5e5e5"></div>
<div class="a" style="left:1025px;top:849px;width:1px;height:49px;background:#cfcfcf"></div>
<div class="a" style="left:1143px;top:822px;width:1px;height:26px;background:#e5e5e5"></div>
<div class="a" style="left:1142px;top:849px;width:1px;height:49px;background:#cfcfcf"></div>
<div class="a" style="left:1260px;top:822px;width:1px;height:26px;background:#e5e5e5"></div>
<div class="a" style="left:1259px;top:849px;width:1px;height:49px;background:#cfcfcf"></div>
<div class="a" style="left:1377px;top:822px;width:1px;height:26px;background:#e5e5e5"></div>
<div class="a" style="left:1376px;top:849px;width:1px;height:49px;background:#cfcfcf"></div>
<div class="a" style="left:1553px;top:822px;width:1px;height:26px;background:#e5e5e5"></div>
<div class="a" style="left:1552px;top:849px;width:1px;height:49px;background:#cfcfcf"></div>
<div class="a" style="left:172px;top:932px;width:1px;height:19px;background:#6d6d6d"></div>
<div class="a" style="left:301px;top:932px;width:1px;height:19px;background:#6d6d6d"></div>
<div class="a" style="left:363px;top:932px;width:1px;height:19px;background:#6d6d6d"></div>
<div class="a" style="left:426px;top:932px;width:1px;height:19px;background:#6d6d6d"></div>
<div class="a" style="left:515px;top:932px;width:1px;height:19px;background:#6d6d6d"></div>
<div class="a" style="left:610px;top:932px;width:1px;height:19px;background:#6d6d6d"></div>
<div class="a" style="left:684px;top:932px;width:1px;height:19px;background:#6d6d6d"></div>
<div class="a" style="left:779px;top:932px;width:1px;height:19px;background:#6d6d6d"></div>
<div class="a" style="left:852px;top:932px;width:1px;height:19px;background:#6d6d6d"></div>
<div class="a" style="left:924px;top:932px;width:1px;height:19px;background:#6d6d6d"></div>
<div class="a" style="left:1024px;top:965px;width:1px;height:24px;background:#a0a0a0"></div>
<div class="a" style="left:1173px;top:965px;width:1px;height:24px;background:#a0a0a0"></div>
<div class="a" style="left:1304px;top:965px;width:1px;height:24px;background:#a0a0a0"></div>
<div class="a" style="left:1393px;top:965px;width:1px;height:24px;background:#a0a0a0"></div>
<div class="a" style="left:1482px;top:965px;width:1px;height:24px;background:#a0a0a0"></div>
<div class="a" style="left:1567px;top:965px;width:1px;height:24px;background:#a0a0a0"></div>
<div class="a" style="left:1654px;top:965px;width:1px;height:24px;background:#a0a0a0"></div>
<div class="a" style="left:1738px;top:965px;width:1px;height:24px;background:#a0a0a0"></div>
<svg class="a" style="left:0;top:0" width="1920" height="990" viewBox="0 0 1920 990">
<g stroke="#5b6f84" stroke-width="2" fill="none"><path d="M1856 15h6.500"/><path d="M1905.300 9.500l6 6.500M1911.300 9.500l-6 6.500" stroke-width="1.800"/><path d="M1880.500 12v4h6v-4zM1882.500 11.500v-2.500h6v4.500h-2" stroke-width="1.300"/></g>
<path d="M6.500 823.500l7 7M13.500 823.500l-7 7" stroke="#000" stroke-width="1.500" fill="none"/>
<path d="M77 839l3.500-6" stroke="#555" stroke-width="1" fill="none"/>
<path d="M1883.500 798v8l-4.500-4zM1904 798v8l4.500-4z" fill="#a0a0a0"/>
<g fill="#fff" stroke="#5088ff" stroke-width="1.600"><rect x="5.800" y="2.200" width="15.300" height="9.900"/></g>
<rect x="5" y="1.100" width="16.900" height="2.400" fill="#5088ff"/>
<rect x="5.800" y="2.200" width="15.300" height="9.900" fill="none" stroke="#4a8a6a" stroke-width="1.600" stroke-dasharray="1.400 3.600"/>
<path d="M8 7.400h4M9.900 5.300v3.200M14.500 5.300v2.700l1.500-.5" stroke="#5088ff" stroke-width="1.100" fill="none"/>
<g fill="#fff" stroke="#5088ff" stroke-width="1.800"><rect x="9.900" y="9.400" width="14.200" height="10.500"/></g>
<rect x="9" y="8.300" width="16" height="2.400" fill="#5088ff"/>
<rect x="9.900" y="9.400" width="14.200" height="10.500" fill="none" stroke="#4a8a6a" stroke-width="1.800" stroke-dasharray="1.400 3.600"/>
<path d="M12 12.600h2l1.400 4.600l1.500-4.600h1.400l1.400 3.800" stroke="#5088ff" stroke-width="1.100" fill="none"/><rect x="20.200" y="16.200" width="1.700" height="1.700" fill="#5088ff"/>
<path d="M25.500 853.5q0-1 1-1h8l4 4v11q0 1-1 1h-11q-1 0-1-1z" fill="#f4f4f4" stroke="#7c7c7c" stroke-width="1.200"/>
<path d="M34.500 852.5v4h4" fill="#fff" stroke="#7c7c7c" stroke-width="1"/>
<circle cx="38" cy="866.3" r="3.700" fill="#2b9be8" stroke="#1b6cab" stroke-width="1"/>
<path d="M25.500 878.5q0-1 1-1h8l4 4v11q0 1-1 1h-11q-1 0-1-1z" fill="#f4f4f4" stroke="#7c7c7c" stroke-width="1.200"/>
<path d="M34.500 877.5v4h4" fill="#fff" stroke="#7c7c7c" stroke-width="1"/>
<circle cx="38" cy="891.3" r="3.700" fill="#f2511f" stroke="#b83a12" stroke-width="1"/>
<rect x="24.900" y="902.600" width="14.200" height="16" rx="1.500" fill="#fff" stroke="#757575" stroke-width="1.200"/>
<path d="M30 907h4v3.800h3.300l-5.300 5.300l-5.300-5.300h3.300z" fill="#f03a10" stroke="#c02a08" stroke-width=".600"/>
<path d="M1535.500 855.5l11 11M1546.500 855.5l-11 11" stroke="#8a8a8a" stroke-width="2" fill="none"/>
<path d="M1535.500 880.5l11 11M1546.500 880.5l-11 11" stroke="#8a8a8a" stroke-width="2" fill="none"/>
<rect x="1744" y="968" width="3" height="10.6" fill="#4d7a00"/>
<rect x="1744" y="980" width="3" height="4" fill="#003f5c"/>
<rect x="1748" y="968" width="3" height="9.3" fill="#4d7a00"/>
<rect x="1748" y="979" width="3" height="5" fill="#003f5c"/>
<rect x="1752" y="968" width="3" height="8.3" fill="#4d7a00"/>
<rect x="1752" y="978" width="3" height="6" fill="#003f5c"/>
<rect x="1756" y="968" width="3" height="7.3" fill="#4d7a00"/>
<rect x="1756" y="977" width="3" height="7" fill="#003f5c"/>
<rect x="1760" y="968" width="3" height="5.5" fill="#4d7a00"/>
<rect x="1760" y="975" width="3" height="9" fill="#003f5c"/>
<rect x="1764" y="968" width="3" height="4.4" fill="#4d7a00"/>
<rect x="1764" y="974" width="3" height="10" fill="#003f5c"/>
<rect x="1768" y="968" width="3" height="3.3" fill="#4d7a00"/>
<rect x="1768" y="973" width="3" height="11" fill="#003f5c"/>
<rect x="1772" y="968" width="3" height="2.5" fill="#4d7a00"/>
<rect x="1772" y="972" width="3" height="12" fill="#003f5c"/>
</svg>
<span class="a" style="left:3.800px;top:952.500px;transform-origin:0 0;transform:rotate(-90deg) scaleX(.885);font-size:15px;line-height:15px;color:#111">Terminal</span>

<span class="a" style="top:3.79px;font-size:15.6px;line-height:15.6px;color:#000;left:34.0px;transform-origin:0 50%;transform:scaleX(0.9069);">File</span>
<span class="a" style="top:3.79px;font-size:15.6px;line-height:15.6px;color:#000;left:78.3px;transform-origin:0 50%;transform:scaleX(0.9394);">View</span>
<span class="a" style="top:3.79px;font-size:15.6px;line-height:15.6px;color:#000;left:131.3px;transform-origin:0 50%;transform:scaleX(0.9077);">Insert</span>
<span class="a" style="top:3.79px;font-size:15.6px;line-height:15.6px;color:#000;left:188.0px;transform-origin:0 50%;transform:scaleX(0.8816);">Charts</span>
<span class="a" style="top:3.79px;font-size:15.6px;line-height:15.6px;color:#000;left:250.5px;transform-origin:0 50%;transform:scaleX(0.9421);">Tools</span>
<span class="a" style="top:3.79px;font-size:15.6px;line-height:15.6px;color:#000;left:306.3px;transform-origin:0 50%;transform:scaleX(0.9789);">Window</span>
<span class="a" style="top:3.79px;font-size:15.6px;line-height:15.6px;color:#000;left:382.6px;transform-origin:0 50%;transform:scaleX(0.9664);">Help</span>
<span class="a" style="top:796.20px;font-size:15px;line-height:15px;color:#757575;left:20.3px;transform-origin:0 50%;transform:scaleX(0.9373);">EURUSD,Monthly</span>
<span class="a" style="top:796.20px;font-size:15px;line-height:15px;color:#000;left:161.7px;transform-origin:0 50%;transform:scaleX(0.8967);">EURUSD,M15</span>
<span class="a" style="top:828.90px;font-size:14.3px;line-height:14.3px;color:#000;left:27.0px;transform-origin:0 50%;transform:scaleX(1.0288);">Order</span>
<span class="a" style="top:828.90px;font-size:14.3px;line-height:14.3px;color:#000;left:345.8px;">Time</span>
<span class="a" style="top:828.90px;font-size:14.3px;line-height:14.3px;color:#000;left:452.0px;">Type</span>
<span class="a" style="top:828.90px;font-size:14.3px;line-height:14.3px;color:#000;left:537.2px;">Size</span>
<span class="a" style="top:828.90px;font-size:14.3px;line-height:14.3px;color:#000;left:622.3px;">Symbol</span>
<span class="a" style="top:828.90px;font-size:14.3px;line-height:14.3px;color:#000;left:754.4px;">Price</span>
<span class="a" style="top:828.90px;font-size:14.3px;line-height:14.3px;color:#000;left:874.6px;">S / L</span>
<span class="a" style="top:828.90px;font-size:14.3px;line-height:14.3px;color:#000;left:991.1px;">T / P</span>
<span class="a" style="top:828.90px;font-size:14.3px;line-height:14.3px;color:#000;left:1105.4px;">Price</span>
<span class="a" style="top:828.90px;font-size:14.3px;line-height:14.3px;color:#000;left:1176.3px;">Commission</span>
<span class="a" style="top:828.90px;font-size:14.3px;line-height:14.3px;color:#000;left:1336.2px;">Swap</span>
<span class="a" style="top:828.90px;font-size:14.3px;line-height:14.3px;color:#000;left:1514.6px;">Profit</span>
<span class="a" style="top:828.90px;font-size:14.3px;line-height:14.3px;color:#000;left:1847.0px;">Comment</span>
<span class="a" style="top:853.50px;font-size:14.3px;line-height:14.3px;color:#000;left:48.3px;transform-origin:0 50%;transform:scaleX(1.0012);">19026226</span>
<span class="a" style="top:853.50px;font-size:14.3px;line-height:14.3px;color:#000;left:251.5px;transform-origin:0 50%;transform:scaleX(0.9681);">2025.07.10 14:33:10</span>
<span class="a" style="top:853.50px;font-size:14.3px;line-height:14.3px;color:#000;left:460.4px;">buy</span>
<span class="a" style="top:853.50px;font-size:14.3px;line-height:14.3px;color:#000;left:537.7px;">0.01</span>
<span class="a" style="top:853.50px;font-size:14.3px;line-height:14.3px;color:#000;left:626.8px;">eurusd</span>
<span class="a" style="top:853.50px;font-size:14.3px;line-height:14.3px;color:#000;left:735.8px;">1.17153</span>
<span class="a" style="top:853.50px;font-size:14.3px;line-height:14.3px;color:#000;left:852.8px;">0.00000</span>
<span class="a" style="top:853.50px;font-size:14.3px;line-height:14.3px;color:#000;left:969.8px;">0.00000</span>
<span class="a" style="top:853.50px;font-size:14.3px;line-height:14.3px;color:#000;left:1086.8px;">1.17130</span>
<span class="a" style="top:853.50px;font-size:14.3px;line-height:14.3px;color:#000;left:1227.7px;">0.00</span>
<span class="a" style="top:853.50px;font-size:14.3px;line-height:14.3px;color:#000;left:1344.7px;">0.00</span>
<span class="a" style="top:853.50px;font-size:14.3px;line-height:14.3px;color:#000;left:1780.0px;">TPS Hedging Power</span>
<span class="a" style="top:853.50px;font-size:14.3px;line-height:14.3px;color:#000;left:1502.6px;">-23</span>
<span class="a" style="top:878.30px;font-size:14.3px;line-height:14.3px;color:#000;left:48.3px;transform-origin:0 50%;transform:scaleX(1.0012);">19026227</span>
<span class="a" style="top:878.30px;font-size:14.3px;line-height:14.3px;color:#000;left:251.5px;transform-origin:0 50%;transform:scaleX(0.9681);">2025.07.10 14:33:10</span>
<span class="a" style="top:878.30px;font-size:14.3px;line-height:14.3px;color:#000;left:462.0px;">sell</span>
<span class="a" style="top:878.30px;font-size:14.3px;line-height:14.3px;color:#000;left:537.7px;">0.01</span>
<span class="a" style="top:878.30px;font-size:14.3px;line-height:14.3px;color:#000;left:626.8px;">eurusd</span>
<span class="a" style="top:878.30px;font-size:14.3px;line-height:14.3px;color:#000;left:735.8px;">1.17133</span>
<span class="a" style="top:878.30px;font-size:14.3px;line-height:14.3px;color:#000;left:852.8px;">0.00000</span>
<span class="a" style="top:878.30px;font-size:14.3px;line-height:14.3px;color:#000;left:969.8px;">0.00000</span>
<span class="a" style="top:878.30px;font-size:14.3px;line-height:14.3px;color:#000;left:1086.8px;">1.17150</span>
<span class="a" style="top:878.30px;font-size:14.3px;line-height:14.3px;color:#000;left:1227.7px;">0.00</span>
<span class="a" style="top:878.30px;font-size:14.3px;line-height:14.3px;color:#000;left:1344.7px;">0.00</span>
<span class="a" style="top:878.30px;font-size:14.3px;line-height:14.3px;color:#000;left:1780.0px;">TPS Hedging Power</span>
<span class="a" style="top:878.30px;font-size:14.3px;line-height:14.3px;color:#000;left:1502.6px;">-17</span>
<span class="a" style="top:903.90px;font-size:14.3px;line-height:14.3px;color:#000;font-weight:bold;left:48.3px;transform-origin:0 50%;transform:scaleX(1.0532);">Balance: 29 564.88 USD  Equity: 29 564.48  Margin: 1.17  Free margin: 29 563.31  Margin level: 2523794.00%</span>
<span class="a" style="top:903.90px;font-size:14.3px;line-height:14.3px;color:#000;font-weight:bold;left:1487.5px;transform-origin:0 50%;transform:scaleX(1.0984);">-0.40</span>
<span class="a" style="top:933.10px;font-size:15px;line-height:15px;color:#000;left:36.5px;transform-origin:0 50%;transform:scaleX(0.9317);">Trade</span>
<span class="a" style="top:933.10px;font-size:15px;line-height:15px;color:#707070;left:99.6px;transform-origin:0 50%;transform:scaleX(0.9341);">Exposure</span>
<span class="a" style="top:933.10px;font-size:15px;line-height:15px;color:#707070;left:184.4px;transform-origin:0 50%;transform:scaleX(0.9910);">Account History</span>
<span class="a" style="top:933.10px;font-size:15px;line-height:15px;color:#707070;left:314.2px;transform-origin:0 50%;transform:scaleX(0.9543);">News</span>
<span class="a" style="top:933.10px;font-size:15px;line-height:15px;color:#707070;left:375.5px;transform-origin:0 50%;transform:scaleX(0.9754);">Alerts</span>
<span class="a" style="top:933.10px;font-size:15px;line-height:15px;color:#707070;left:438.6px;transform-origin:0 50%;transform:scaleX(1.0215);">Mailbox</span>
<span class="a" style="top:933.10px;font-size:15px;line-height:15px;color:#707070;left:527.2px;transform-origin:0 50%;transform:scaleX(0.9969);">Market</span>
<span class="a" style="top:933.10px;font-size:15px;line-height:15px;color:#707070;left:622.2px;transform-origin:0 50%;transform:scaleX(0.9962);">Articles</span>
<span class="a" style="top:933.10px;font-size:15px;line-height:15px;color:#707070;left:695.9px;transform-origin:0 50%;transform:scaleX(0.9432);">Code Base</span>
<span class="a" style="top:933.10px;font-size:15px;line-height:15px;color:#707070;left:791.4px;transform-origin:0 50%;transform:scaleX(0.9280);">Experts</span>
<span class="a" style="top:933.10px;font-size:15px;line-height:15px;color:#707070;left:863.8px;transform-origin:0 50%;transform:scaleX(0.9512);">Journal</span>
<span class="a" style="top:939.77px;font-size:11.5px;line-height:11.5px;color:#e0001a;font-weight:bold;left:495.7px;transform-origin:0 50%;transform:scaleX(0.9054);">5</span>
<span class="a" style="top:939.77px;font-size:11.5px;line-height:11.5px;color:#e0001a;font-weight:bold;left:577.2px;transform-origin:0 50%;transform:scaleX(1.0163);">122</span>
<span class="a" style="top:969.70px;font-size:15px;line-height:15px;color:#000;left:1.5px;transform-origin:0 50%;transform:scaleX(0.9379);">For Help, press F1</span>
<span class="a" style="top:969.70px;font-size:15px;line-height:15px;color:#000;left:1030.7px;transform-origin:0 50%;transform:scaleX(1.0099);">Default</span>
<span class="a" style="top:969.70px;font-size:15px;line-height:15px;color:#000;left:1780.4px;transform-origin:0 50%;transform:scaleX(0.9996);">48/1 kb</span>
<span class="a" style="top:52.53px;font-size:23px;line-height:23px;color:#ff0000;left:1751.0px;transform-origin:0 50%;transform:scaleX(1.0142);">EURUSD</span>
<span class="a" style="top:72.03px;font-size:16.5px;line-height:16.5px;color:#858585;left:1762.7px;transform-origin:0 50%;transform:scaleX(1.0116);">Spread: 2.0</span>
<span class="a" style="top:87.83px;font-size:16.5px;line-height:16.5px;color:#858585;left:1763.5px;transform-origin:0 50%;transform:scaleX(1.0241);">0.00 $ / Pip</span>
<span class="a" style="top:103.73px;font-size:16.5px;line-height:16.5px;color:#858585;left:1697.3px;transform-origin:0 50%;transform:scaleX(1.0020);">Balance: 29564.88 $</span>
<span class="a" style="top:119.63px;font-size:16.5px;line-height:16.5px;color:#858585;left:1710.5px;transform-origin:0 50%;transform:scaleX(1.0065);">Equity: 29564.48 $</span>
<span class="a" style="top:135.73px;font-size:16.5px;line-height:16.5px;color:#858585;left:1667.5px;transform-origin:0 50%;transform:scaleX(1.0044);">Free Margin: 29563.31 $</span>
<span class="a" style="top:152.23px;font-size:23px;line-height:23px;color:#ff0000;left:1680.5px;transform-origin:0 50%;transform:scaleX(0.9915);">P/L Sym. -0.40 $</span>
<span class="a" style="top:174.03px;font-size:16.5px;line-height:16.5px;color:#ff0000;left:1727.6px;transform-origin:0 50%;transform:scaleX(1.0313);">P/L Buy: -0.23 $</span>
<span class="a" style="top:190.03px;font-size:16.5px;line-height:16.5px;color:#ff0000;left:1733.7px;transform-origin:0 50%;transform:scaleX(1.0110);">P/L sell: -0.17 $</span>
<span class="a" style="top:205.73px;font-size:16.5px;line-height:16.5px;color:#ff0000;left:1727.6px;transform-origin:0 50%;transform:scaleX(1.0477);">P/L Acc. -0.40 $</span>
<span class="a" style="top:222.03px;font-size:16.5px;line-height:16.5px;color:#858585;left:1708.7px;transform-origin:0 50%;transform:scaleX(0.9997);">Pips2Go B 22 S 22</span>
<span class="a" style="top:53.38px;font-size:15.5px;line-height:15.5px;color:#fff;left:28.7px;transform-origin:0 50%;transform:scaleX(0.9466);">TPS HEDGING POWER</span>
<span class="a" style="top:33.02px;font-size:11.8px;line-height:11.8px;color:#c8c8c8;font-family:'DejaVu Sans Condensed','DejaVu Sans',sans-serif;left:23.0px;transform-origin:0 50%;transform:scaleX(1.0204);">EURUSD,M15</span>
<span class="a" style="top:35.02px;font-size:11.8px;line-height:11.8px;color:#d8d8d8;font-family:'DejaVu Sans Condensed','DejaVu Sans',sans-serif;left:1664.0px;transform-origin:0 50%;transform:scaleX(1.0657);">TPS Hedging Power EA_fix_fix</span>
<span class="a" style="top:32.30px;font-size:11.7px;line-height:11.7px;color:#c8c8c8;font-family:'DejaVu Sans Condensed','DejaVu Sans',sans-serif;left:1861.5px;transform-origin:0 50%;transform:scaleX(1.0237);">1.17940</span>
<span class="a" style="top:83.30px;font-size:11.7px;line-height:11.7px;color:#c8c8c8;font-family:'DejaVu Sans Condensed','DejaVu Sans',sans-serif;left:1861.5px;transform-origin:0 50%;transform:scaleX(1.0237);">1.17860</span>
<span class="a" style="top:133.30px;font-size:11.7px;line-height:11.7px;color:#c8c8c8;font-family:'DejaVu Sans Condensed','DejaVu Sans',sans-serif;left:1861.5px;transform-origin:0 50%;transform:scaleX(1.0237);">1.17780</span>
<span class="a" style="top:184.30px;font-size:11.7px;line-height:11.7px;color:#c8c8c8;font-family:'DejaVu Sans Condensed','DejaVu Sans',sans-serif;left:1861.5px;transform-origin:0 50%;transform:scaleX(1.0237);">1.17700</span>
<span class="a" style="top:235.30px;font-size:11.7px;line-height:11.7px;color:#c8c8c8;font-family:'DejaVu Sans Condensed','DejaVu Sans',sans-serif;left:1861.5px;transform-origin:0 50%;transform:scaleX(1.0237);">1.17620</span>
<span class="a" style="top:285.30px;font-size:11.7px;line-height:11.7px;color:#c8c8c8;font-family:'DejaVu Sans Condensed','DejaVu Sans',sans-serif;left:1861.5px;transform-origin:0 50%;transform:scaleX(1.0237);">1.17540</span>
<span class="a" style="top:336.30px;font-size:11.7px;line-height:11.7px;color:#c8c8c8;font-family:'DejaVu Sans Condensed','DejaVu Sans',sans-serif;left:1861.5px;transform-origin:0 50%;transform:scaleX(1.0237);">1.17460</span>
<span class="a" style="top:387.30px;font-size:11.7px;line-height:11.7px;color:#c8c8c8;font-family:'DejaVu Sans Condensed','DejaVu Sans',sans-serif;left:1861.5px;transform-origin:0 50%;transform:scaleX(1.0237);">1.17380</span>
<span class="a" style="top:437.30px;font-size:11.7px;line-height:11.7px;color:#c8c8c8;font-family:'DejaVu Sans Condensed','DejaVu Sans',sans-serif;left:1861.5px;transform-origin:0 50%;transform:scaleX(1.0237);">1.17300</span>
<span class="a" style="top:488.30px;font-size:11.7px;line-height:11.7px;color:#c8c8c8;font-family:'DejaVu Sans Condensed','DejaVu Sans',sans-serif;left:1861.5px;transform-origin:0 50%;transform:scaleX(1.0237);">1.17220</span>
<span class="a" style="top:590.30px;font-size:11.7px;line-height:11.7px;color:#c8c8c8;font-family:'DejaVu Sans Condensed','DejaVu Sans',sans-serif;left:1861.5px;transform-origin:0 50%;transform:scaleX(1.0237);">1.17060</span>
<span class="a" style="top:640.30px;font-size:11.7px;line-height:11.7px;color:#c8c8c8;font-family:'DejaVu Sans Condensed','DejaVu Sans',sans-serif;left:1861.5px;transform-origin:0 50%;transform:scaleX(1.0237);">1.16980</span>
<span class="a" style="top:691.30px;font-size:11.7px;line-height:11.7px;color:#c8c8c8;font-family:'DejaVu Sans Condensed','DejaVu Sans',sans-serif;left:1861.5px;transform-origin:0 50%;transform:scaleX(1.0237);">1.16900</span>
<span class="a" style="top:742.30px;font-size:11.7px;line-height:11.7px;color:#c8c8c8;font-family:'DejaVu Sans Condensed','DejaVu Sans',sans-serif;left:1861.5px;transform-origin:0 50%;transform:scaleX(1.0237);">1.16820</span>
<span class="a" style="top:404.00px;font-size:11.7px;line-height:11.7px;color:#000;font-family:'DejaVu Sans Condensed','DejaVu Sans',sans-serif;left:1861.5px;transform-origin:0 50%;transform:scaleX(1.0237);">1.17353</span>
<span class="a" style="top:417.00px;font-size:11.7px;line-height:11.7px;color:#000;font-family:'DejaVu Sans Condensed','DejaVu Sans',sans-serif;left:1861.5px;transform-origin:0 50%;transform:scaleX(1.0237);">1.17333</span>
<span class="a" style="top:544.20px;font-size:11.7px;line-height:11.7px;color:#000;font-family:'DejaVu Sans Condensed','DejaVu Sans',sans-serif;left:1861.5px;transform-origin:0 50%;transform:scaleX(1.0237);">1.17130</span>
<span class="a" style="top:657.50px;font-size:11.7px;line-height:11.7px;color:#000;font-family:'DejaVu Sans Condensed','DejaVu Sans',sans-serif;left:1861.5px;transform-origin:0 50%;transform:scaleX(1.0237);">1.16953</span>
<span class="a" style="top:670.50px;font-size:11.7px;line-height:11.7px;color:#000;font-family:'DejaVu Sans Condensed','DejaVu Sans',sans-serif;left:1861.5px;transform-origin:0 50%;transform:scaleX(1.0237);">1.16933</span>
<span class="a" style="top:771.72px;font-size:11.8px;line-height:11.8px;color:#c8c8c8;font-family:'DejaVu Sans Condensed','DejaVu Sans',sans-serif;left:4.0px;transform-origin:0 50%;transform:scaleX(1.0692);">4 Jul 2025</span>
<span class="a" style="top:771.72px;font-size:11.8px;line-height:11.8px;color:#c8c8c8;font-family:'DejaVu Sans Condensed','DejaVu Sans',sans-serif;left:100.0px;transform-origin:0 50%;transform:scaleX(1.0547);">7 Jul 00:30</span>
<span class="a" style="top:771.72px;font-size:11.8px;line-height:11.8px;color:#c8c8c8;font-family:'DejaVu Sans Condensed','DejaVu Sans',sans-serif;left:196.0px;transform-origin:0 50%;transform:scaleX(1.0547);">7 Jul 06:30</span>
<span class="a" style="top:771.72px;font-size:11.8px;line-height:11.8px;color:#c8c8c8;font-family:'DejaVu Sans Condensed','DejaVu Sans',sans-serif;left:292.0px;transform-origin:0 50%;transform:scaleX(1.0547);">7 Jul 12:30</span>
<span class="a" style="top:771.72px;font-size:11.8px;line-height:11.8px;color:#c8c8c8;font-family:'DejaVu Sans Condensed','DejaVu Sans',sans-serif;left:388.0px;transform-origin:0 50%;transform:scaleX(1.0547);">7 Jul 18:30</span>
<span class="a" style="top:771.72px;font-size:11.8px;line-height:11.8px;color:#c8c8c8;font-family:'DejaVu Sans Condensed','DejaVu Sans',sans-serif;left:484.0px;transform-origin:0 50%;transform:scaleX(1.0547);">8 Jul 00:30</span>
<span class="a" style="top:771.72px;font-size:11.8px;line-height:11.8px;color:#c8c8c8;font-family:'DejaVu Sans Condensed','DejaVu Sans',sans-serif;left:580.0px;transform-origin:0 50%;transform:scaleX(1.0547);">8 Jul 06:30</span>
<span class="a" style="top:771.72px;font-size:11.8px;line-height:11.8px;color:#c8c8c8;font-family:'DejaVu Sans Condensed','DejaVu Sans',sans-serif;left:676.0px;transform-origin:0 50%;transform:scaleX(1.0547);">8 Jul 12:30</span>
<span class="a" style="top:771.72px;font-size:11.8px;line-height:11.8px;color:#c8c8c8;font-family:'DejaVu Sans Condensed','DejaVu Sans',sans-serif;left:772.0px;transform-origin:0 50%;transform:scaleX(1.0547);">8 Jul 18:30</span>
<span class="a" style="top:771.72px;font-size:11.8px;line-height:11.8px;color:#c8c8c8;font-family:'DejaVu Sans Condensed','DejaVu Sans',sans-serif;left:868.0px;transform-origin:0 50%;transform:scaleX(1.0547);">9 Jul 00:30</span>
<span class="a" style="top:771.72px;font-size:11.8px;line-height:11.8px;color:#c8c8c8;font-family:'DejaVu Sans Condensed','DejaVu Sans',sans-serif;left:964.0px;transform-origin:0 50%;transform:scaleX(1.0547);">9 Jul 06:30</span>
<span class="a" style="top:771.72px;font-size:11.8px;line-height:11.8px;color:#c8c8c8;font-family:'DejaVu Sans Condensed','DejaVu Sans',sans-serif;left:1060.0px;transform-origin:0 50%;transform:scaleX(1.0547);">9 Jul 12:30</span>
<span class="a" style="top:771.72px;font-size:11.8px;line-height:11.8px;color:#c8c8c8;font-family:'DejaVu Sans Condensed','DejaVu Sans',sans-serif;left:1156.0px;transform-origin:0 50%;transform:scaleX(1.0547);">9 Jul 18:30</span>
<span class="a" style="top:771.72px;font-size:11.8px;line-height:11.8px;color:#c8c8c8;font-family:'DejaVu Sans Condensed','DejaVu Sans',sans-serif;left:1252.0px;transform-origin:0 50%;transform:scaleX(1.0528);">10 Jul 00:30</span>
<span class="a" style="top:771.72px;font-size:11.8px;line-height:11.8px;color:#c8c8c8;font-family:'DejaVu Sans Condensed','DejaVu Sans',sans-serif;left:1348.0px;transform-origin:0 50%;transform:scaleX(1.0528);">10 Jul 06:30</span>
<span class="a" style="top:771.72px;font-size:11.8px;line-height:11.8px;color:#c8c8c8;font-family:'DejaVu Sans Condensed','DejaVu Sans',sans-serif;left:1444.0px;transform-origin:0 50%;transform:scaleX(1.0528);">10 Jul 12:30</span>
<span class="a" style="top:522.27px;font-size:11.5px;line-height:11.5px;color:#a8a8a8;font-family:'DejaVu Sans Condensed','DejaVu Sans',sans-serif;left:14.0px;transform-origin:0 50%;transform:scaleX(1.0347);">#19026226 buy 0.01</span>
<span class="a" style="top:535.27px;font-size:11.5px;line-height:11.5px;color:#a8a8a8;font-family:'DejaVu Sans Condensed','DejaVu Sans',sans-serif;left:14.0px;transform-origin:0 50%;transform:scaleX(1.0513);">#19026227 sell 0.01</span>

</body></html>
